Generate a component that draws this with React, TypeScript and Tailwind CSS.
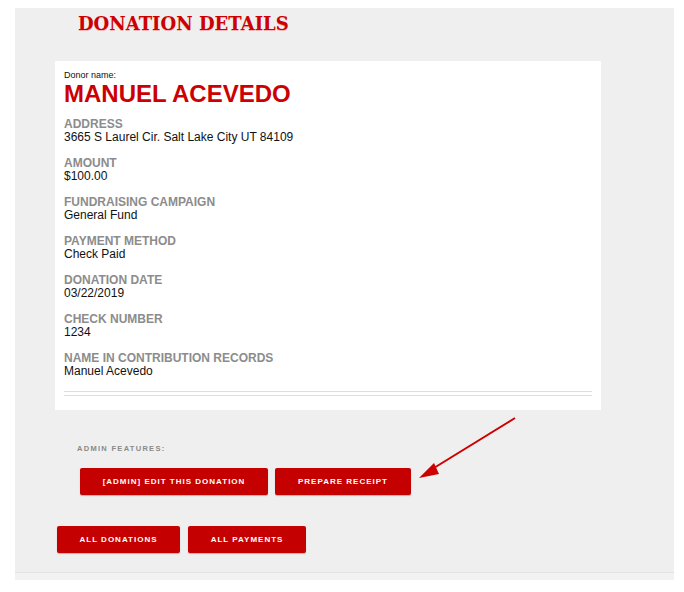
const fields = [
  { label: 'ADDRESS', value: '3665 S Laurel Cir. Salt Lake City UT 84109' },
  { label: 'AMOUNT', value: '$100.00' },
  { label: 'FUNDRAISING CAMPAIGN', value: 'General Fund' },
  { label: 'PAYMENT METHOD', value: 'Check Paid' },
  { label: 'DONATION DATE', value: '03/22/2019' },
  { label: 'CHECK NUMBER', value: '1234' },
  { label: 'NAME IN CONTRIBUTION RECORDS', value: 'Manuel Acevedo' },
];

function RedButton({ label, width }: { label: string; width: string }) {
  return (
    <button
      className={`${width} h-[27px] rounded-[2px] bg-[#c40000] text-white text-[8px] font-bold tracking-[1px] leading-none shadow-[0_1px_1px_rgba(0,0,0,0.25)]`}
    >
      {label}
    </button>
  );
}

export default function App() {
  return (
    <div className="w-[684px] h-[592px] bg-white pt-[8px] pl-[15px] font-['Liberation_Sans',Arial,sans-serif]">
      <div className="relative flex flex-col w-[659px] h-[572px] bg-[#efefef]">
        <h1 className="pl-[63px] pt-[2px] h-[53px] text-[18px] leading-[28px] font-bold text-[#cc0000] font-['DejaVu_Serif',serif] [text-shadow:0_1px_0_#f2b4b4]">
          DONATION DETAILS
        </h1>

        <div className="ml-[40px] w-[546px] bg-white pt-[9px] pb-[14px] px-[9px]">
          <div className="text-[9px] leading-[10px] text-[#111]">Donor name:</div>
          <div className="text-[24px] leading-[28px] font-bold text-[#cc0000] mb-[10px]">MANUEL ACEVEDO</div>
          {fields.map((f) => (
            <div key={f.label} className="mb-[13px]">
              <div className="text-[12px] leading-[13px] font-bold text-[#8c8c8c]">{f.label}</div>
              <div className="text-[12px] leading-[13px] text-[#111]">{f.value}</div>
            </div>
          ))}
          <div className="mt-[2px] h-[5px] border-y border-[#dedede]" />
        </div>

        <div className="pl-[62px] pt-[34px] text-[7.5px] leading-[10px] font-bold tracking-[1.3px] text-[#8a8a8a]">
          ADMIN FEATURES:
        </div>
        <div className="flex gap-[7px] pl-[65px] pt-[14px]">
          <RedButton label="[ADMIN] EDIT THIS DONATION" width="w-[188px]" />
          <RedButton label="PREPARE RECEIPT" width="w-[136px]" />
        </div>

        <div className="flex gap-[8px] pl-[42px] pt-[31px]">
          <RedButton label="ALL DONATIONS" width="w-[123px]" />
          <RedButton label="ALL PAYMENTS" width="w-[118px]" />
        </div>

        <div className="mt-auto h-[8px] border-t border-[#e3e3e3] bg-[#f2f2f2]" />

        {/* annotation arrow pointing at the receipt button */}
        <svg className="absolute left-0 top-0 pointer-events-none" width="659" height="572" viewBox="0 0 659 572">
          <line x1="500" y1="410" x2="414" y2="463" stroke="#cc0000" strokeWidth="2" />
          <polygon points="404,470 419,455 424,466" fill="#cc0000" />
        </svg>
      </div>
    </div>
  );
}
